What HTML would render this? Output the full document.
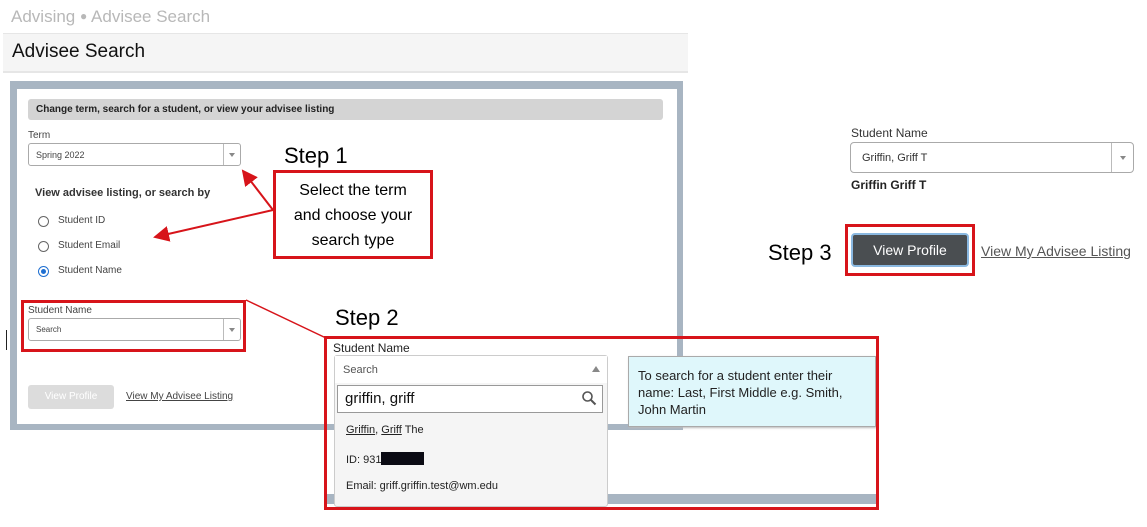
<!DOCTYPE html>
<html><head><style>
*{margin:0;padding:0;box-sizing:border-box}
body{width:1147px;height:527px;background:#fff;position:relative;overflow:hidden;font-family:"Liberation Sans",sans-serif;color:#222}
.a{position:absolute;white-space:nowrap}
.sel{position:absolute;border:1px solid #aaa;border-radius:3px;background:#fff}
.sel .dv{position:absolute;right:16px;top:0;bottom:0;border-left:1px solid #bbb}
.sel .tri{position:absolute;right:5px;top:50%;margin-top:-2px;width:0;height:0;border-left:3px solid transparent;border-right:3px solid transparent;border-top:4px solid #888}
.red{position:absolute;border:3px solid #d7141a}
.rad{position:absolute;width:11px;height:11px;border:1px solid #666;border-radius:50%;background:#fff}
</style></head><body>
<div class="a" style="left:11px;top:7px;font-size:17px;color:#b8b8b8">Advising <span style="font-size:12px;position:relative;top:-2px">●</span> Advisee Search</div>
<div class="a" style="left:3px;top:33px;width:685px;height:40px;background:#f5f5f5;border-top:1px solid #e6e6e6;border-bottom:2px solid #e6e6e6"></div>
<div class="a" style="left:12px;top:41px;font-size:19px;color:#111">Advisee Search</div>

<div class="a" style="left:10px;top:81px;width:673px;height:349px;background:#a8b5c2"></div>
<div class="a" style="left:17px;top:89px;width:660px;height:335px;background:#fff"></div>
<div class="a" style="left:28px;top:99px;width:635px;height:21px;background:#d4d4d4;border-radius:3px"></div>
<div class="a" style="left:36px;top:104px;font-size:10px;font-weight:bold;color:#222">Change term, search for a student, or view your advisee listing</div>
<div class="a" style="left:28px;top:130px;font-size:10px;color:#444">Term</div>
<div class="sel" style="left:28px;top:143px;width:213px;height:23px"><div class="dv"></div><div class="tri"></div><span class="a" style="left:7px;top:6px;font-size:9px;color:#444">Spring 2022</span></div>
<div class="a" style="left:35px;top:187px;font-size:11px;font-weight:bold;color:#333">View advisee listing, or search by</div>
<div class="rad" style="left:38px;top:216px"></div><div class="a" style="left:58px;top:215px;font-size:10px;color:#444">Student ID</div>
<div class="rad" style="left:38px;top:241px"></div><div class="a" style="left:58px;top:240px;font-size:10px;color:#444">Student Email</div>
<div class="rad" style="left:38px;top:266px;border-color:#1f6fd1"><div style="position:absolute;left:2px;top:2px;width:5px;height:5px;border-radius:50%;background:#1f6fd1"></div></div><div class="a" style="left:58px;top:265px;font-size:10px;color:#444">Student Name</div>

<div class="a" style="left:284px;top:143px;font-size:22px;color:#000">Step 1</div>
<div class="red" style="left:273px;top:170px;width:160px;height:89px;background:#fff"></div>
<div class="a" style="left:273px;top:178px;width:160px;text-align:center;font-size:16px;line-height:25px;color:#000;white-space:normal">Select the term<br>and choose your<br>search type</div>

<div class="red" style="left:21px;top:300px;width:225px;height:52px"></div>
<div class="a" style="left:28px;top:305px;font-size:10px;color:#444">Student Name</div>
<div class="sel" style="left:28px;top:318px;width:213px;height:23px"><div class="dv"></div><div class="tri"></div><span class="a" style="left:7px;top:6px;font-size:8px;color:#444">Search</span></div>
<div class="a" style="left:6px;top:330px;width:1px;height:20px;background:#222"></div>

<div class="a" style="left:28px;top:385px;width:86px;height:24px;background:#dcdcdc;border-radius:3px;color:#fff;font-size:10px;text-align:center;line-height:24px">View Profile</div>
<div class="a" style="left:126px;top:391px;font-size:10px;color:#444;text-decoration:underline">View My Advisee Listing</div>

<svg class="a" style="left:0;top:0" width="1147" height="527">
<defs><marker id="m" markerWidth="8" markerHeight="8" refX="7" refY="4" orient="auto"><path d="M0,0 L8,4 L0,8 z" fill="#d7141a"/></marker></defs>
<line x1="273" y1="210" x2="243" y2="171" stroke="#d7141a" stroke-width="2" marker-end="url(#m)"/>
<line x1="273" y1="210" x2="155" y2="237" stroke="#d7141a" stroke-width="2" marker-end="url(#m)"/>
<line x1="246" y1="300" x2="326" y2="338" stroke="#d7141a" stroke-width="1.5"/>
</svg>

<div class="a" style="left:335px;top:305px;font-size:22px;color:#000">Step 2</div>
<div class="a" style="left:324px;top:494px;width:552px;height:10px;background:#a8b5c2"></div>
<div class="a" style="left:333px;top:341px;font-size:12px;color:#222">Student Name</div>
<div class="a" style="left:334px;top:355px;width:274px;height:152px;background:#f5f5f5;border:1px solid #ccc;border-radius:3px"></div>
<div class="a" style="left:335px;top:356px;width:272px;height:27px;background:#fff"></div>
<div class="a" style="left:343px;top:364px;font-size:11px;color:#555">Search</div>
<div class="a" style="left:592px;top:366px;width:0;height:0;border-left:4px solid transparent;border-right:4px solid transparent;border-bottom:6px solid #888"></div>
<div class="a" style="left:337px;top:385px;width:266px;height:28px;background:#fff;border:1px solid #999"></div>
<div class="a" style="left:345px;top:390px;font-size:15px;color:#111">griffin, griff</div>
<svg class="a" style="left:581px;top:390px" width="16" height="16"><circle cx="6.5" cy="6.5" r="4.5" fill="none" stroke="#555" stroke-width="1.6"/><line x1="10" y1="10" x2="14.5" y2="14.5" stroke="#555" stroke-width="2"/></svg>
<div class="a" style="left:346px;top:424px;font-size:11px;color:#222"><u>Griffin</u>, <u>Griff</u> The</div>
<div class="a" style="left:346px;top:452px;font-size:11px;color:#222">ID: 931<span style="display:inline-block;width:43px;height:13px;background:#0b0b14;vertical-align:-2px"></span></div>
<div class="a" style="left:346px;top:480px;font-size:11px;color:#222">Email: griff.griffin.test@wm.edu</div>
<div class="a" style="left:628px;top:356px;width:248px;height:71px;background:#dff7fb;border:1px solid #aaa;box-shadow:1px 1px 2px #bbb"></div>
<div class="a" style="left:638px;top:367px;width:230px;font-size:13px;line-height:17px;color:#222;white-space:normal">To search for a student enter their name: Last, First Middle e.g. Smith, John Martin</div>
<div class="red" style="left:324px;top:336px;width:555px;height:174px"></div>

<div class="a" style="left:851px;top:126px;font-size:12px;color:#333">Student Name</div>
<div class="sel" style="left:850px;top:142px;width:284px;height:31px;border-radius:4px"><div class="dv" style="right:21px"></div><div class="tri" style="right:7px"></div><span class="a" style="left:11px;top:9px;font-size:11px;color:#333">Griffin, Griff T</span></div>
<div class="a" style="left:851px;top:178px;font-size:12px;font-weight:bold;color:#222">Griffin Griff T</div>
<div class="a" style="left:768px;top:240px;font-size:22px;color:#000">Step 3</div>
<div class="red" style="left:845px;top:224px;width:130px;height:52px"></div>
<div class="a" style="left:851px;top:233px;width:118px;height:34px;background:#4a4e51;border:2px solid #8ab8e0;border-radius:4px;color:#fff;font-size:14px;text-align:center;line-height:30px">View Profile</div>
<div class="a" style="left:981px;top:243px;font-size:14px;color:#555;text-decoration:underline">View My Advisee Listing</div>
</body></html>
